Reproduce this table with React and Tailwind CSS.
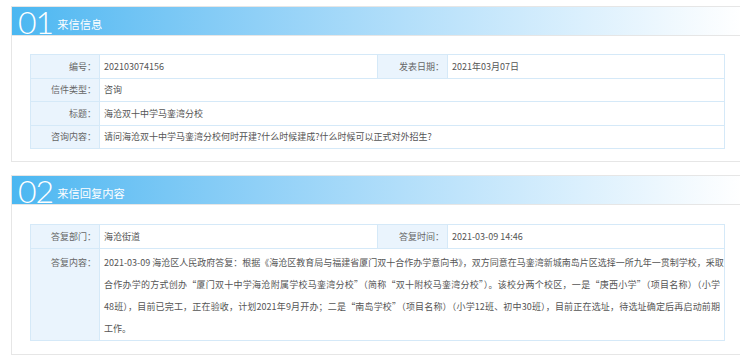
import React from "react";

const font = { fontFamily: '"Noto Sans CJK SC", "Microsoft YaHei", sans-serif' };

function Header({ num, title }) {
  return (
    <div className="flex h-[29px] items-center border-b border-[#e6e6e6] bg-gradient-to-r from-[#4ab7f1] to-white pl-[6px]">
      <span className="font-['Lato',sans-serif] font-light text-[32px] leading-[29px] text-white tracking-[-1px]">
        {num}
      </span>
      <span className="ml-[4px] mt-[5px] text-[11.3px] leading-[14px] text-white">{title}</span>
    </div>
  );
}

const L = "bg-[#eaf4fd] border border-[#d5e9f8] text-right pr-[3px] text-[#666] align-middle";
const V = "bg-white border border-[#d5e9f8] pl-[4px] text-[#555] align-middle";

export default function App() {
  return (
    <div className="w-[740px] h-[359px] overflow-hidden bg-white pt-[6px] text-[9px]" style={font}>
      <div className="ml-[11px] w-[732px] border border-[#e6e6e6]">
        <Header num="01" title="来信信息" />
        <div className="pl-[18px] pr-[17px] pt-[18px] pb-[12px]">
          <table className="w-[694px] table-fixed border-collapse">
            <colgroup>
              <col className="w-[69px]" />
              <col className="w-[278px]" />
              <col className="w-[70px]" />
              <col className="w-[277px]" />
            </colgroup>
            <tbody>
              <tr className="h-[24px]">
                <td className={L}>编号：</td>
                <td className={V}>202103074156</td>
                <td className={L}>发表日期：</td>
                <td className={V}>2021年03月07日</td>
              </tr>
              <tr className="h-[23px]">
                <td className={L}>信件类型：</td>
                <td className={V} colSpan={3}>咨询</td>
              </tr>
              <tr className="h-[24px]">
                <td className={L}>标题：</td>
                <td className={V} colSpan={3}>海沧双十中学马銮湾分校</td>
              </tr>
              <tr className="h-[23px]">
                <td className={L}>咨询内容：</td>
                <td className={V} colSpan={3}>请问海沧双十中学马銮湾分校何时开建?什么时候建成?什么时候可以正式对外招生?</td>
              </tr>
            </tbody>
          </table>
        </div>
      </div>

      <div className="ml-[11px] mt-[13px] w-[732px] border border-[#e6e6e6]">
        <Header num="02" title="来信回复内容" />
        <div className="pl-[18px] pr-[17px] pt-[19px] pb-[13px]">
          <table className="w-[694px] table-fixed border-collapse">
            <colgroup>
              <col className="w-[69px]" />
              <col className="w-[278px]" />
              <col className="w-[70px]" />
              <col className="w-[277px]" />
            </colgroup>
            <tbody>
              <tr className="h-[24px]">
                <td className={L}>答复部门：</td>
                <td className={V}>海沧街道</td>
                <td className={L}>答复时间：</td>
                <td className={V}>2021-03-09 14:46</td>
              </tr>
              <tr>
                <td className={L + " align-top pt-[3px] leading-[22px]"}>答复内容：</td>
                <td className={V + " align-top pt-[3px] pb-0 pr-[4px] leading-[22px]"} colSpan={3}>
                  <div className="whitespace-nowrap text-justify [text-align-last:justify]">2021-03-09 海沧区人民政府答复：根据《海沧区教育局与福建省厦门双十合作办学意向书》，双方同意在马銮湾新城南岛片区选择一所九年一贯制学校，采取</div>
                  <div className="whitespace-nowrap text-justify [text-align-last:justify]">合作办学的方式创办“厦门双十中学海沧附属学校马銮湾分校”（简称“双十附校马銮湾分校”）。该校分两个校区，一是“庚西小学”（项目名称）（小学</div>
                  <div className="whitespace-nowrap text-justify [text-align-last:justify]">48班），目前已完工，正在验收，计划2021年9月开办；二是“南岛学校”（项目名称）（小学12班、初中30班），目前正在选址，待选址确定后再启动前期</div>
                  <div className="whitespace-nowrap">工作。</div>
                </td>
              </tr>
            </tbody>
          </table>
        </div>
      </div>
    </div>
  );
}
